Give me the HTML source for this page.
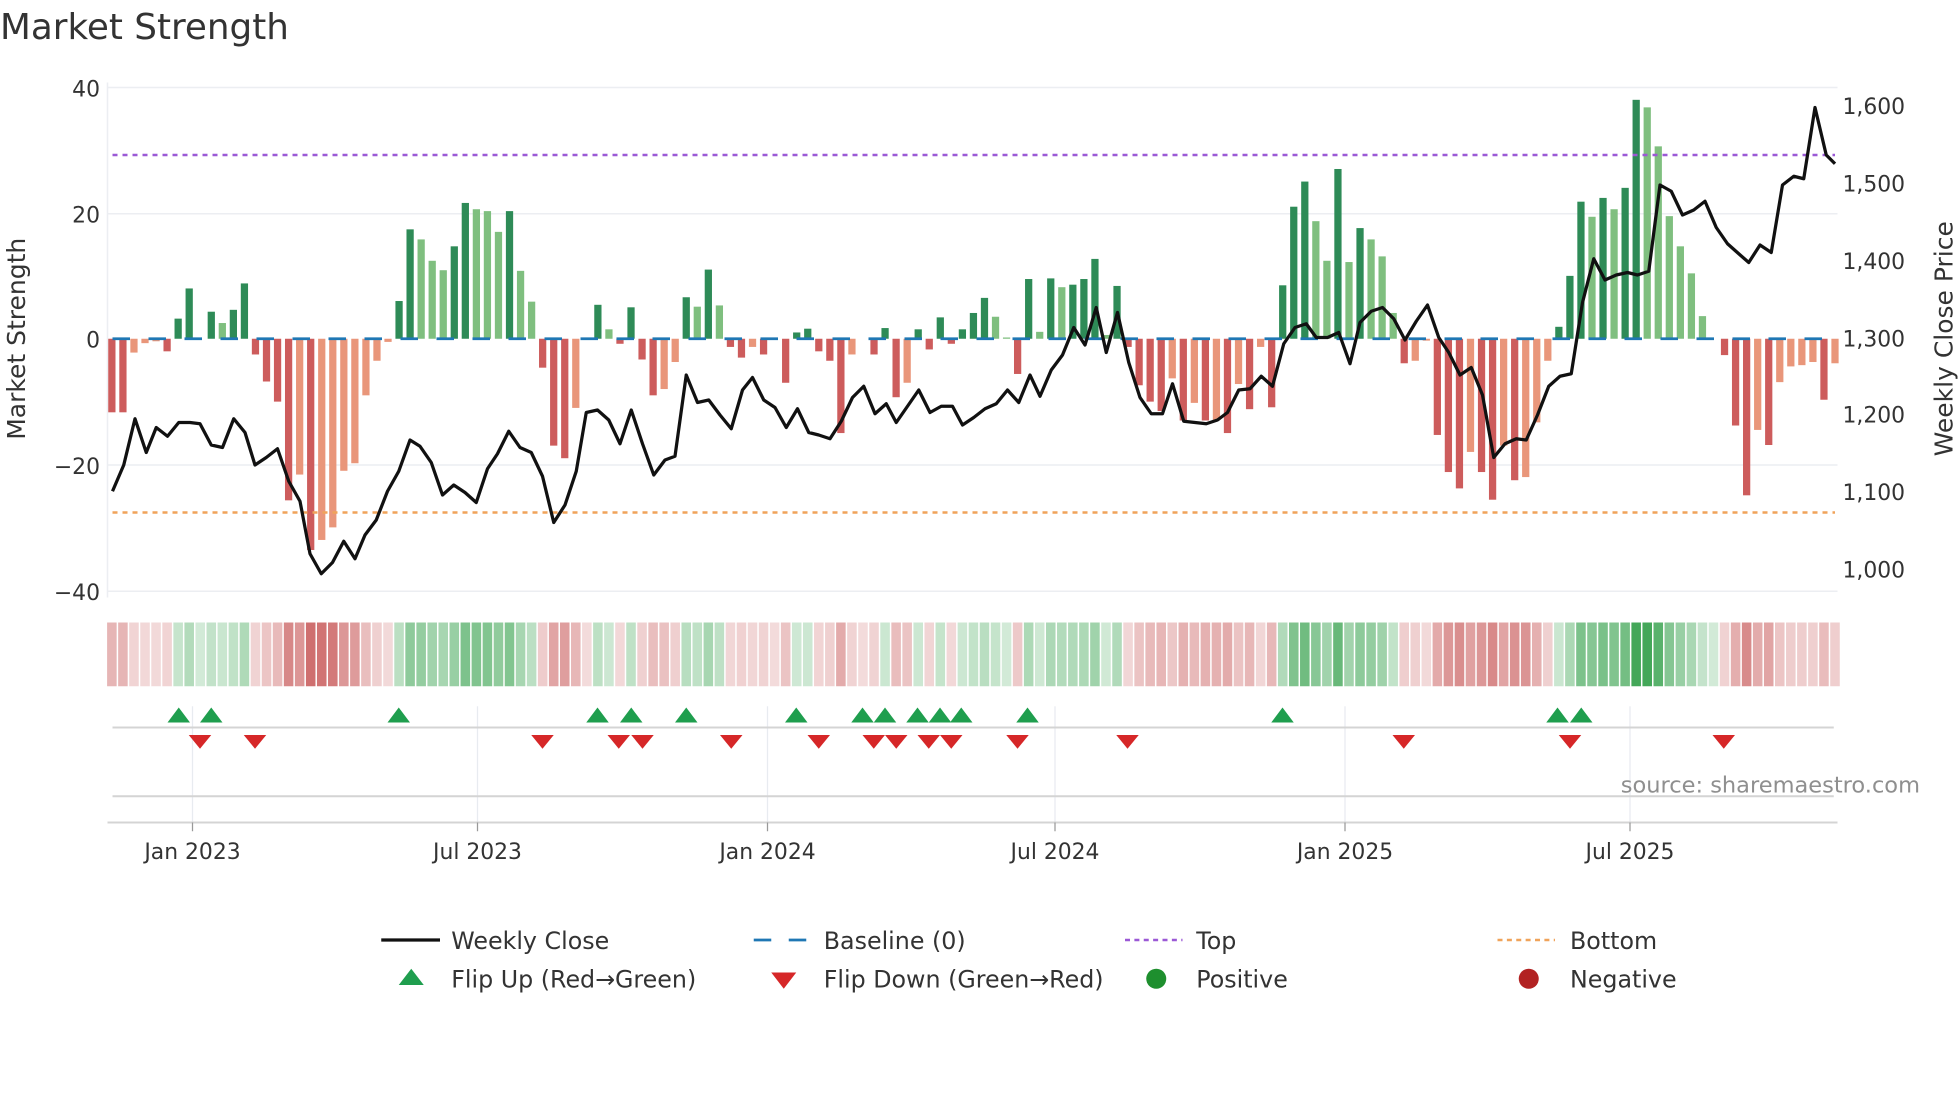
<!DOCTYPE html>
<html><head><meta charset="utf-8"><style>
html,body{margin:0;padding:0;background:#fff;width:1960px;height:1102px;overflow:hidden}
svg{display:block}
text{font-family:"DejaVu Sans","Liberation Sans",sans-serif;fill:#333}
</style></head><body>
<svg id="s" width="1960" height="1102" viewBox="0 0 1568 881.6" xmlns="http://www.w3.org/2000/svg">
<text x="0" y="31" font-size="28.6">Market Strength</text>
<!-- grid -->
<g stroke="#eceef2" stroke-width="1.2">
<line x1="86" y1="70" x2="1470" y2="70"/><line x1="86" y1="171" x2="1470" y2="171"/>
<line x1="86" y1="372" x2="1470" y2="372"/><line x1="86" y1="473" x2="1470" y2="473"/>
<line x1="86" y1="66" x2="86" y2="478"/>
</g>
<g id="bars"></g>
<line x1="90" y1="271" x2="1468" y2="271" stroke="#1f77b4" stroke-width="2.2" stroke-dasharray="14 14.8"/>
<line x1="90" y1="124" x2="1468" y2="124" stroke="#9b59d6" stroke-width="2" stroke-dasharray="4 4"/>
<line x1="90" y1="410" x2="1468" y2="410" stroke="#f0a35a" stroke-width="2" stroke-dasharray="4 4"/>
<polyline id="price" fill="none" stroke="#111" stroke-width="2.6" stroke-linejoin="round"/>
<!-- left axis -->
<g font-size="17.5" text-anchor="end">
<text x="80" y="77">40</text><text x="80" y="178">20</text><text x="80" y="278">0</text>
<text x="80" y="379">−20</text><text x="80" y="480">−40</text>
</g>
<text transform="translate(20,271) rotate(-90)" font-size="20" text-anchor="middle">Market Strength</text>
<g font-size="17.5">
<text x="1474" y="91">1,600</text><text x="1474" y="153">1,500</text><text x="1474" y="215">1,400</text>
<text x="1474" y="277">1,300</text><text x="1474" y="338">1,200</text><text x="1474" y="400">1,100</text><text x="1474" y="462">1,000</text>
</g>
<text transform="translate(1562,271) rotate(-90)" font-size="20" text-anchor="middle">Weekly Close Price</text>
<g id="strip"></g>
<!-- flips area -->
<g stroke="#e8ebf0" stroke-width="1">
<line x1="154" y1="565" x2="154" y2="658"/><line x1="382" y1="565" x2="382" y2="658"/>
<line x1="614" y1="565" x2="614" y2="658"/><line x1="844" y1="565" x2="844" y2="658"/>
<line x1="1076" y1="565" x2="1076" y2="658"/><line x1="1304" y1="565" x2="1304" y2="658"/>
</g>
<line x1="90" y1="582" x2="1467" y2="582" stroke="#d4d4d4" stroke-width="1.6"/>
<line x1="90" y1="637" x2="1467" y2="637" stroke="#d4d4d4" stroke-width="1.6"/>
<line x1="86" y1="658" x2="1470" y2="658" stroke="#d4d4d4" stroke-width="1.6"/>
<g stroke="#999" stroke-width="1">
<line x1="154" y1="658" x2="154" y2="665"/><line x1="382" y1="658" x2="382" y2="665"/>
<line x1="614" y1="658" x2="614" y2="665"/><line x1="844" y1="658" x2="844" y2="665"/>
<line x1="1076" y1="658" x2="1076" y2="665"/><line x1="1304" y1="658" x2="1304" y2="665"/>
</g>
<g id="flips"></g>
<text x="1536" y="634" font-size="18" text-anchor="end" style="fill:#8f8f8f">source: sharemaestro.com</text>
<g font-size="17.5" text-anchor="middle">
<text x="154" y="687">Jan 2023</text><text x="382" y="687">Jul 2023</text><text x="614" y="687">Jan 2024</text>
<text x="844" y="687">Jul 2024</text><text x="1076" y="687">Jan 2025</text><text x="1304" y="687">Jul 2025</text>
</g>
<!-- legend -->
<g font-size="19">
<line x1="305" y1="752" x2="352" y2="752" stroke="#111" stroke-width="2.6"/>
<text x="361" y="759">Weekly Close</text>
<line x1="603" y1="752" x2="649" y2="752" stroke="#1f77b4" stroke-width="2.2" stroke-dasharray="14 14"/>
<text x="659" y="759">Baseline (0)</text>
<line x1="900" y1="752" x2="946" y2="752" stroke="#9b59d6" stroke-width="2" stroke-dasharray="4 3.5"/>
<text x="957" y="759">Top</text>
<line x1="1198" y1="752" x2="1244" y2="752" stroke="#f0a35a" stroke-width="2" stroke-dasharray="4 3.5"/>
<text x="1256" y="759">Bottom</text>
<polygon points="319,788 339,788 329,775" fill="#1f9e4e"/>
<text x="361" y="790">Flip Up (Red→Green)</text>
<polygon points="617,778 637,778 627,791" fill="#d62728"/>
<text x="659" y="790">Flip Down (Green→Red)</text>
<circle cx="925" cy="783" r="8" fill="#1e8f2e"/>
<text x="957" y="790">Positive</text>
<circle cx="1223" cy="783" r="8" fill="#b22222"/>
<text x="1256" y="790">Negative</text>
</g>
</svg>
<script>
var NS="http://www.w3.org/2000/svg";
function el(t,a,p){var e=document.createElementNS(NS,t);for(var k in a)e.setAttribute(k,a[k]);p.appendChild(e);return e;}
var D=[[-11.7,1],[-11.7,1],[-2.2,0],[-0.7,0],[-0.4,0],[-2,1],[3.2,1],[8,1],[0,0],[4.3,1],[2.5,0],[4.6,1],[8.8,1],[-2.5,1],[-6.8,1],[-10,1],[-25.7,1],[-21.6,0],[-33.6,1],[-32,0],[-30,0],[-21,0],[-19.8,0],[-9,0],[-3.5,0],[-0.5,0],[6,1],[17.4,1],[15.8,0],[12.4,0],[10.9,0],[14.7,1],[21.6,1],[20.6,0],[20.3,0],[17,0],[20.3,1],[10.8,0],[5.9,0],[-4.6,1],[-17,1],[-19,1],[-11,0],[0,0],[5.4,1],[1.5,0],[-0.8,1],[5,1],[-3.3,1],[-9,1],[-8,0],[-3.7,0],[6.6,1],[5.1,0],[11,1],
[5.3,0],[-1.3,1],[-3,1],[-1.3,0],[-2.5,1],[0,0],[-7,1],[1,1],[1.6,1],[-2,1],[-3.5,1],[-15,1],[-2.5,0],[0,0],[-2.5,1],[1.7,1],[-9.3,1],[-7,0],[1.5,1],[-1.7,1],[3.4,1],[-0.8,1],[1.5,1],[4.1,1],[6.5,1],[3.5,0],[0.2,0],[-5.6,1],[9.5,1],[1.1,0],[9.6,1],[8.2,0],[8.6,1],[9.5,1],[12.7,1],[0.6,0],[8.4,1],[-1.3,1],[-7.4,1],[-10,1],[-11.5,1],[-6.3,0],[-13,1],[-10.2,0],[-13,1],[-13,0],[-15,1],[-7.2,0],[-11.2,1],[-1.3,0],[-10.9,1],[8.5,1],[21,1],[25,1],
[18.7,0],[12.4,0],[27,1],[12.2,0],[17.6,1],[15.8,0],[13.1,0],[4.1,0],[-3.9,1],[-3.5,0],[-0.3,0],[-15.3,1],[-21.2,1],[-23.8,1],[-18,0],[-21.2,1],[-25.6,1],[-17,0],[-22.5,1],[-22,0],[-13.3,0],[-3.5,0],[1.9,1],[10,1],[21.8,1],[19.4,0],[22.4,1],[20.6,0],[24,1],[38,1],[36.8,0],[30.6,0],[19.5,0],[14.7,0],[10.4,0],[3.6,0],[0,0],[-2.6,1],[-13.8,1],[-24.9,1],[-14.5,0],[-16.9,1],[-6.9,0],[-4.4,0],[-4.2,0],[-3.7,0],[-9.7,1],[-3.9,0]];
var N=D.length,x0=89.5,dx=(1468-89.5)/(N-1),sc=5.03,z=271;
var B=document.getElementById("bars"),S=document.getElementById("strip");
var last=-1;
for(var i=0;i<N;i++){
 var v=D[i][0],dk=D[i][1],cx=x0+i*dx;
 if(v!==0){
  var c=v>0?(dk?"#2e8b57":"#7fbf7f"):(dk?"#cd5c5c":"#e9967a");
  var h=Math.abs(v)*sc;
  el("rect",{x:cx-2.9,y:v>0?z-h:z,width:5.8,height:h,fill:c},B);
  last=v>0?1:-1;
 }
 var a=0.22+0.7*Math.min(Math.abs(v)/36,1);
 var col=(v>0||(v===0&&last>0))?"rgb(52,160,75)":"rgb(200,90,90)";
 el("rect",{x:cx-dx/2+0.6,y:498,width:dx-1.2,height:51,fill:col,"fill-opacity":a},S);
}
var P=[[90,393],[99,372],[108,335],[117,362],[125,342],[134,349],[143,338],[152,338],[160,339],[169,356],[178,358],[187,335],[196,346],[204,372],[213,366],[222,359],[231,385],[240,401],[248,443],[257,459],[266,450],[275,433],[284,447],[292,428],[301,416],[310,393],[319,377],[328,352],[336,357],[345,370],[354,396],[363,388],[372,394],[381,402],[390,375],[398,363],[407,345],[416,358],[425,362],[434,381],[443,418],[452,404],[461,377],[469,330],[478,328],[487,336],[496,355],[505,328],[514,355],[523,380],[532,368],[540,365],[549,300],[558,322],[567,320],[576,332],[585,343],[594,312],[602,302],[611,320],[620,326],[629,342],[638,327],[647,346],[655,348],[664,351],[673,337],[682,318],[691,309],[700,331],[709,323],[717,338],[726,325],[735,312],[744,330],[753,325],[762,325],[770,340],[779,334],[788,327],[797,323],[806,312],[815,322],[824,300],[832,317],[841,296],[850,284],[859,262],[868,276],[877,246],[885,282],[894,250],[903,290],[912,318],[921,331],[930,331],[938,307],[947,337],[956,338],[965,339],[974,336],[982,330],[991,312],[1000,311],[1009,301],[1018,309],[1027,275],[1036,262],[1045,259],[1053,270],[1062,270],[1071,266],[1080,291],[1088,258],[1097,249],[1106,246],[1115,255],[1124,272],[1133,257],[1142,244],[1151,270],[1159,282],[1168,300],[1177,294],[1186,316],[1195,366],[1204,355],[1213,351],[1221,352],[1230,332],[1239,309],[1248,301],[1257,299],[1266,242],[1275,207],[1284,224],[1293,220],[1302,218],[1310,220],[1319,217],[1328,148],[1337,153],[1346,172],[1355,168],[1364,161],[1373,182],[1382,195],[1391,203],[1399,210],[1408,196],[1417,202],[1426,148],[1435,141],[1443,143],[1452,86],[1461,124],[1468,131]];
document.getElementById("price").setAttribute("points",P.map(function(p){return p.join(",")}).join(" "));
var F=document.getElementById("flips");
[143,169,319,478,505,549,637,690,708,734,752,769,822,1026,1246,1265].forEach(function(x){el("polygon",{points:(x-9)+",578 "+(x+9)+",578 "+x+",566",fill:"#1f9e4e"},F);});
[160,204,434,495,514,585,655,699,717,743,761,814,902,1123,1256,1379].forEach(function(x){el("polygon",{points:(x-9)+",588 "+(x+9)+",588 "+x+",599",fill:"#d62728"},F);});
</script>
</body></html>
